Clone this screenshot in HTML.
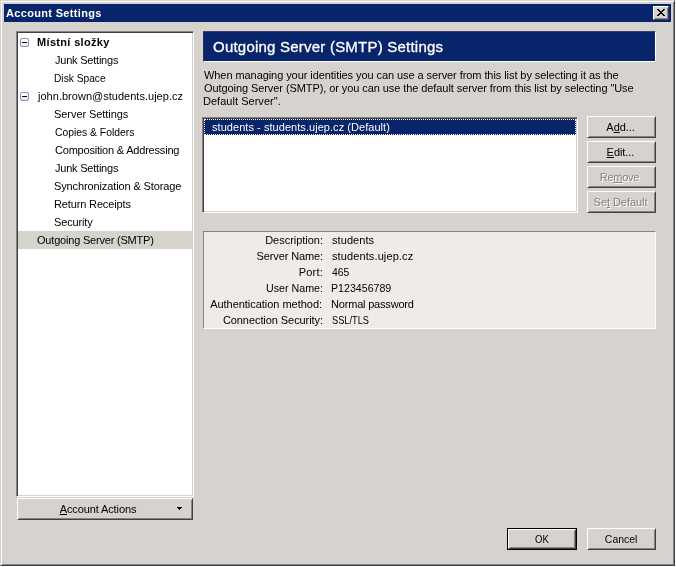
<!DOCTYPE html>
<html lang="en">
<head>
<meta charset="utf-8">
<title>Account Settings</title>
<style>
html,body{margin:0;padding:0;background:#fff;}
body{width:676px;height:567px;position:relative;overflow:hidden;will-change:transform;
  font-family:"Liberation Sans",sans-serif;font-size:11px;color:#000;line-height:13px;}
*{box-sizing:border-box;}
.abs{position:absolute;}
#win{left:0;top:0;width:675px;height:566px;background:#d6d3ce;
  border:1px solid;border-color:#d6d3ce #424142 #424142 #d6d3ce;
  box-shadow:inset 1px 1px 0 #fff,inset -1px -1px 0 #848284;}
#title{left:4px;top:4px;width:667px;height:18px;background:#08246b;color:#fff;font-weight:bold;}
#title span{position:absolute;left:2px;top:3px;white-space:nowrap;}
.raised{background:#d6d3ce;border:1px solid;border-color:#fff #424142 #424142 #fff;
  box-shadow:inset 1px 1px 0 #d6d3ce,inset -1px -1px 0 #848284;}
.sunken{background:#fff;border:1px solid;border-color:#848284 #fff #fff #848284;
  box-shadow:inset 1px 1px 0 #424142,inset -1px -1px 0 #d6d3ce;}
#close{left:653px;top:6px;width:16px;height:14px;}
#close svg{position:absolute;left:3px;top:2px;}
.btn{text-align:center;white-space:nowrap;}
.btn span.l{position:absolute;left:0;right:0;top:4px;}
.btn.dis{color:#848284;text-shadow:1px 1px 0 #fff;}
u{text-decoration:underline;text-decoration-thickness:1px;text-underline-offset:1px;text-decoration-skip-ink:none;}
#tree{left:16px;top:31px;width:178px;height:466px;}
.row{position:absolute;left:1px;width:174px;height:18px;white-space:nowrap;}
.row span{position:absolute;top:3px;}
.row .t0{left:19px;}
.row .t1{left:37px;}
.row.sel{background:#d6d3ce;}
.tw{position:absolute;left:2px;top:5px;width:9px;height:9px;border:1px solid #8d8dc2;border-radius:2px;background:linear-gradient(#fff 55%,#e6e4de);}
.tw i{position:absolute;left:1px;top:3px;width:5px;height:1px;background:#000;}
#hdr{left:203px;top:31px;width:453px;height:31px;background:#08246b;color:#fff;
  border:1px solid;border-color:#3d435f #fff #fff #2a3461;font-size:15px;line-height:18px;}
#hdr span{position:absolute;left:9px;top:6px;white-space:nowrap;-webkit-text-stroke:0.3px #fff;}
#desc{left:204px;top:69px;width:440px;white-space:nowrap;}
#list{left:202px;top:117px;width:376px;height:96px;}
#item{position:absolute;left:1px;top:1px;width:372px;height:16px;background:#08246b;color:#fff;
  border:1px dotted #fbf7e6;white-space:nowrap;}
#item span{position:absolute;left:7px;top:1px;}
#det{left:203px;top:231px;width:453px;height:98px;background:#efebe7;
  border:1px solid;border-color:#848284 #fff #fff #848284;}
.dr{position:absolute;left:0;height:16px;width:451px;white-space:nowrap;}
.dr .k{position:absolute;right:332px;top:2px;}
.dr .v{position:absolute;left:128px;top:2px;}
.bt,#desc span{display:inline-block;}
.row span,.dr span,#item span,#hdr span,#title span{transform-origin:0 50%;}
#tt{letter-spacing:0.33px;}
#r0{letter-spacing:0.33px;}
#r1{letter-spacing:-0.22px;}
#r2{transform:translateX(-1px) scaleX(0.928);}
#r3{letter-spacing:0.02px;transform:translateX(1px);}
#r4{letter-spacing:-0.06px;transform:translateX(-1px);}
#r5{transform:scaleX(0.940);}
#r6{letter-spacing:-0.20px;}
#r7{letter-spacing:-0.22px;}
#r8{letter-spacing:-0.12px;transform:translateX(-1px);}
#r9{letter-spacing:-0.14px;transform:translateX(-1px);}
#r10{letter-spacing:-0.14px;transform:translateX(-1px);}
#r11{letter-spacing:-0.20px;}
#bacct{letter-spacing:-0.11px;}
#ht{letter-spacing:0.22px;}
#p0{letter-spacing:-0.07px;}
#p1{letter-spacing:-0.08px;}
#p2{letter-spacing:0.03px;transform:translateX(-1px);}
#li{letter-spacing:0.05px;}
#badd{letter-spacing:-0.08px;transform:translateX(-1px);}
#bedit{letter-spacing:-0.05px;transform:translateX(-1px);}
#brem{letter-spacing:-0.28px;transform:translateX(-2px);}
#bset{letter-spacing:-0.06px;transform:translateX(-1px);}
#bok{transform:scaleX(0.865);}
#bcan{transform:scaleX(0.949);}
#k0{letter-spacing:-0.02px;}
#k1{letter-spacing:-0.12px;}
#k2{letter-spacing:0.20px;}
#k3{transform:translateX(2px) scaleX(0.970);}
#k4{letter-spacing:-0.03px;transform:translateX(-1px);}
#k5{letter-spacing:-0.07px;}
#v0{letter-spacing:0.07px;}
#v1{letter-spacing:0.11px;}
#v2{transform:scaleX(0.944);}
#v3{transform:translateX(-1px) scaleX(0.966);}
#v4{letter-spacing:-0.19px;transform:translateX(-1px);}
#v5{transform:scaleX(0.840);}
</style>
</head>
<body>
<div id="win" class="abs"></div>
<div id="title" class="abs"><span id="tt">Account Settings</span></div>
<div id="close" class="abs raised"><svg width="8" height="7" viewBox="0 0 8 7" shape-rendering="crispEdges"><path fill="#000" d="M0 0h2v1h-2zM6 0h2v1h-2zM1 1h2v1h-2zM5 1h2v1h-2zM2 2h4v1h-4zM3 3h2v1h-2zM2 4h4v1h-4zM1 5h2v1h-2zM5 5h2v1h-2zM0 6h2v1h-2zM6 6h2v1h-2z"/></svg></div>

<div id="tree" class="abs sunken">
  <div class="row" style="top:1px;font-weight:bold"><div class="tw"><i></i></div><span id="r0" class="t0">Místní složky</span></div>
  <div class="row" style="top:19px"><span id="r1" class="t1">Junk Settings</span></div>
  <div class="row" style="top:37px"><span id="r2" class="t1">Disk Space</span></div>
  <div class="row" style="top:55px"><div class="tw"><i></i></div><span id="r3" class="t0">john.brown@students.ujep.cz</span></div>
  <div class="row" style="top:73px"><span id="r4" class="t1">Server Settings</span></div>
  <div class="row" style="top:91px"><span id="r5" class="t1">Copies &amp; Folders</span></div>
  <div class="row" style="top:109px"><span id="r6" class="t1">Composition &amp; Addressing</span></div>
  <div class="row" style="top:127px"><span id="r7" class="t1">Junk Settings</span></div>
  <div class="row" style="top:145px"><span id="r8" class="t1">Synchronization &amp; Storage</span></div>
  <div class="row" style="top:163px"><span id="r9" class="t1">Return Receipts</span></div>
  <div class="row" style="top:181px"><span id="r10" class="t1">Security</span></div>
  <div class="row sel" style="top:199px"><span id="r11" class="t0">Outgoing Server (SMTP)</span></div>
</div>

<div class="abs raised btn" style="left:17px;top:498px;width:176px;height:22px;"><span class="l" style="right:14px"><span class="bt" id="bacct"><u>A</u>ccount Actions</span></span>
  <svg class="abs" style="left:159px;top:8px" width="5" height="3" viewBox="0 0 5 3" shape-rendering="crispEdges"><path fill="#000" d="M0 0h5v1h-5zM1 1h3v1h-3zM2 2h1v1h-1z"/></svg></div>

<div id="hdr" class="abs"><span id="ht">Outgoing Server (SMTP) Settings</span></div>
<div id="desc" class="abs"><span id="p0">When managing your identities you can use a server from this list by selecting it as the</span><br><span id="p1">Outgoing Server (SMTP), or you can use the default server from this list by selecting "Use</span><br><span id="p2">Default Server".</span></div>

<div id="list" class="abs sunken"><div id="item"><span id="li">students - students.ujep.cz (Default)</span></div></div>

<div class="abs raised btn" style="left:587px;top:116px;width:69px;height:22px;"><span class="l"><span class="bt" id="badd">A<u>d</u>d...</span></span></div>
<div class="abs raised btn" style="left:587px;top:141px;width:69px;height:22px;"><span class="l"><span class="bt" id="bedit"><u>E</u>dit...</span></span></div>
<div class="abs raised btn dis" style="left:587px;top:166px;width:69px;height:22px;"><span class="l"><span class="bt" id="brem">Re<u>m</u>ove</span></span></div>
<div class="abs raised btn dis" style="left:587px;top:191px;width:69px;height:22px;"><span class="l"><span class="bt" id="bset">Se<u>t</u> Default</span></span></div>

<div id="det" class="abs">
  <div class="dr" style="top:0px"><span id="k0" class="k">Description:</span><span id="v0" class="v">students</span></div>
  <div class="dr" style="top:16px"><span id="k1" class="k">Server Name:</span><span id="v1" class="v">students.ujep.cz</span></div>
  <div class="dr" style="top:32px"><span id="k2" class="k">Port:</span><span id="v2" class="v">465</span></div>
  <div class="dr" style="top:48px"><span id="k3" class="k">User Name:</span><span id="v3" class="v">P123456789</span></div>
  <div class="dr" style="top:64px"><span id="k4" class="k">Authentication method:</span><span id="v4" class="v">Normal password</span></div>
  <div class="dr" style="top:80px"><span id="k5" class="k">Connection Security:</span><span id="v5" class="v">SSL/TLS</span></div>
</div>

<div class="abs" style="left:507px;top:528px;width:70px;height:22px;border:1px solid #000;"><div class="raised btn" style="position:absolute;left:0;top:0;width:68px;height:20px;"><span class="l" style="top:3px"><span class="bt" id="bok">OK</span></span></div></div>
<div class="abs raised btn" style="left:587px;top:528px;width:69px;height:22px;"><span class="l"><span class="bt" id="bcan">Cancel</span></span></div>
</body>
</html>
